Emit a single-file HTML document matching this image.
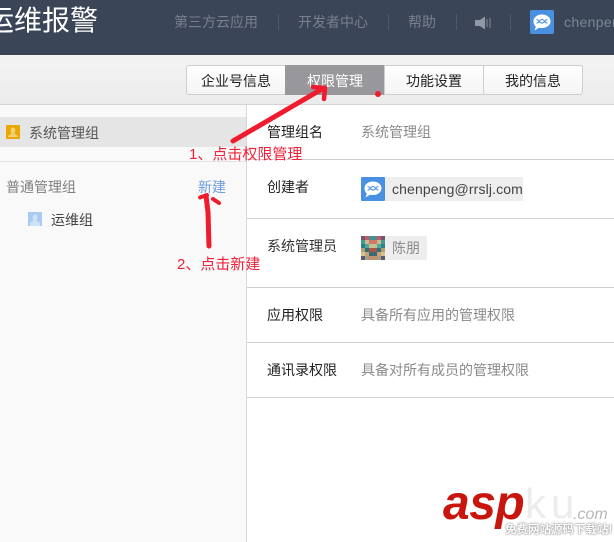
<!DOCTYPE html>
<html lang="zh"><head><meta charset="utf-8">
<style>
html,body{margin:0;padding:0;background:#fff}
#p{position:relative;width:614px;height:542px;overflow:hidden;background:#fff;font-family:"Liberation Sans","Noto Sans CJK SC",sans-serif;font-size:14px;line-height:20px;color:#222}
.a{position:absolute;white-space:nowrap}
.g{color:#8a8a8a}
.n{color:#76808e;top:12px}
.sep{position:absolute;top:14px;width:1px;height:16px;background:#4e5a6a}
.t{position:absolute;top:65px;height:30px;line-height:30px;text-align:center;box-sizing:border-box;background:linear-gradient(#fff,#f4f4f4);border:1px solid #cfcfcf;color:#222}
.hr{position:absolute;left:247px;width:367px;height:1px;background:#cfcfcf}
.r{color:#f0213a;font-size:15px}
</style></head><body><div id="p">
<div class="a" style="left:0;top:0;width:614px;height:55px;background:#3a4558"></div>
<div class="a" style="left:-14px;top:3px;font-size:28px;line-height:36px;color:#fff">运维报警</div>
<div class="a n" style="left:174px">第三方云应用</div>
<div class="sep" style="left:278px"></div>
<div class="a n" style="left:298px">开发者中心</div>
<div class="sep" style="left:388px"></div>
<div class="a n" style="left:408px">帮助</div>
<div class="sep" style="left:456px"></div>
<svg class="a" style="left:475px;top:16px" width="16" height="14" viewBox="0 0 16 14"><path d="M0 4h5l5-3.500v13L5 10H0z" fill="#8f98a4"/><path d="M12 3v8M15 2v10" stroke="#7d8693" stroke-width="1.100"/></svg>
<div class="sep" style="left:510px"></div>
<svg class="a" style="left:530px;top:10px" width="24" height="24" viewBox="0 0 24 24"><rect width="24" height="24" rx="2" fill="#4a90e2"/><path d="M12 4.500c5 0 8.500 3 8.500 6.800s-3.500 6.700-8.500 6.700c-1 0-2 0-3-.3L4.500 20.500l1.300-3.900C4.200 15.300 3.500 13.300 3.500 11.300 3.500 7.500 7 4.500 12 4.500z" fill="#fff"/><path d="M6.500 9.500c2.500 0 3 3.600 5.500 3.600s3-3.600 5.500-3.600M6.500 13.100c2.500 0 3-3.600 5.500-3.600s3 3.600 5.500 3.600" fill="none" stroke="#4a90e2" stroke-width="1.100"/></svg>
<div class="a" style="left:564px;top:12px;color:#7c8694;font-size:14px;letter-spacing:.35px">chenpeng</div>

<div class="a" style="left:0;top:55px;width:614px;height:49px;background:linear-gradient(#f3f3f3,#ececec)"></div>
<div class="a" style="left:0;top:104px;width:614px;height:1px;background:#d4d4d4"></div>
<div class="t" style="left:186px;width:100px;border-radius:3px 0 0 3px">企业号信息</div>
<div class="t" style="left:285px;width:100px;background:#98989c;border-color:#98989c;color:#fff">权限管理</div>
<div class="t" style="left:384px;width:100px">功能设置</div>
<div class="t" style="left:483px;width:100px;border-radius:0 3px 3px 0">我的信息</div>

<div class="a" style="left:0;top:105px;width:246px;height:437px;background:#f9f9f9"></div>
<div class="a" style="left:246px;top:105px;width:1px;height:437px;background:#d8d8d8"></div>
<div class="a" style="left:0;top:117px;width:246px;height:30px;background:#e5e5e5"></div>
<svg class="a" style="left:6px;top:125px" width="14" height="14" viewBox="0 0 14 14"><rect width="14" height="14" rx="1" fill="#e8a800"/><path d="M7 2.500c1.500 0 2.300 1.200 2.300 2.700S8.600 8 8.400 8.800c.8.800 3.100 1.200 3.600 2.700v.5H2v-.5c.5-1.500 2.800-1.900 3.600-2.700C5.400 8 4.700 6.700 4.700 5.200S5.500 2.500 7 2.500z" fill="#f3cf78"/></svg>
<div class="a" style="left:29px;top:123px;color:#555">系统管理组</div>
<div class="a" style="left:0;top:161px;width:246px;height:1px;background:#e3e3e3"></div>
<div class="a" style="left:6px;top:177px;color:#808080">普通管理组</div>
<div class="a" style="left:198px;top:177px;color:#6f9fdc">新建</div>
<svg class="a" style="left:28px;top:212px" width="14" height="14" viewBox="0 0 14 14"><rect width="14" height="14" fill="#a9cbf2"/><path d="M7 2.500c1.500 0 2.300 1.200 2.300 2.700S8.600 8 8.400 8.800c.8.800 3.100 1.200 3.600 2.700V14H2v-2.500c.5-1.500 2.800-1.900 3.600-2.700C5.400 8 4.700 6.700 4.700 5.200S5.500 2.500 7 2.500z" fill="#d0e2f8"/></svg>
<div class="a" style="left:51px;top:210px;color:#444">运维组</div>

<div class="a" style="left:267px;top:122px">管理组名</div>
<div class="a g" style="left:361px;top:122px">系统管理组</div>
<div class="hr" style="top:159px"></div>
<div class="a" style="left:267px;top:177px">创建者</div>
<div class="a" style="left:361px;top:177px;width:162px;height:24px;background:#eeeeee"></div>
<svg class="a" style="left:361px;top:177px" width="24" height="24" viewBox="0 0 24 24"><rect width="24" height="24" rx="1" fill="#4a90e2"/><path d="M12 4.500c5 0 8.500 3 8.500 6.800s-3.500 6.700-8.500 6.700c-1 0-2 0-3-.3L4.500 20.500l1.300-3.900C4.200 15.300 3.500 13.300 3.500 11.300 3.500 7.500 7 4.500 12 4.500z" fill="#fff"/><path d="M6.500 9.500c2.500 0 3 3.600 5.500 3.600s3-3.600 5.500-3.600M6.500 13.100c2.500 0 3-3.600 5.500-3.600s3 3.600 5.500 3.600" fill="none" stroke="#4a90e2" stroke-width="1.100"/></svg>
<div class="a" style="left:392px;top:179px;color:#444;letter-spacing:.13px">chenpeng@rrslj.com</div>
<div class="hr" style="top:218px"></div>
<div class="a" style="left:267px;top:236px;color:#333">系统管理员</div>
<div class="a" style="left:361px;top:236px;width:66px;height:24px;background:#eeeeee;border-radius:0 2px 2px 0"></div>
<svg class="a" style="left:361px;top:236px" width="24" height="24" viewBox="0 0 6 6" shape-rendering="crispEdges">
<g id="q">
<rect x="0" y="0" width="1" height="1" fill="#6b5a6e"/><rect x="1" y="0" width="1" height="1" fill="#c25a68"/><rect x="2" y="0" width="1" height="1" fill="#4a8f90"/>
<rect x="0" y="1" width="1" height="1" fill="#3f9a9a"/><rect x="1" y="1" width="1" height="1" fill="#d8b48a"/><rect x="2" y="1" width="1" height="1" fill="#c97a6a"/>
<rect x="0" y="2" width="1" height="1" fill="#2f7f85"/><rect x="1" y="2" width="1" height="1" fill="#4fa8a0"/><rect x="2" y="2" width="1" height="1" fill="#c8c090"/>
<rect x="0" y="3" width="1" height="1" fill="#b0a070"/><rect x="1" y="3" width="1" height="1" fill="#2f6f7a"/><rect x="2" y="3" width="1" height="1" fill="#a8554a"/>
<rect x="0" y="4" width="1" height="1" fill="#d8c090"/><rect x="1" y="4" width="1" height="1" fill="#c9a080"/><rect x="2" y="4" width="1" height="1" fill="#3a6a70"/>
<rect x="0" y="5" width="1" height="1" fill="#5a5a78"/><rect x="1" y="5" width="1" height="1" fill="#a8a080"/><rect x="2" y="5" width="1" height="1" fill="#c09070"/>
</g>
<use href="#q" transform="matrix(-1 0 0 1 6 0)"/>
</svg>
<div class="a g" style="left:392px;top:238px">陈朋</div>
<div class="hr" style="top:287px"></div>
<div class="a" style="left:267px;top:305px">应用权限</div>
<div class="a g" style="left:361px;top:305px">具备所有应用的管理权限</div>
<div class="hr" style="top:342px"></div>
<div class="a" style="left:267px;top:360px">通讯录权限</div>
<div class="a g" style="left:361px;top:360px">具备对所有成员的管理权限</div>
<div class="hr" style="top:397px"></div>

<svg class="a" style="left:0;top:0" width="614" height="542" viewBox="0 0 614 542" fill="none" stroke="#ee1c2e" stroke-linecap="round" stroke-linejoin="round">
<path d="M233 141L322 89" stroke-width="5"/>
<path d="M313 87L325 88L324 99" stroke-width="4.500"/>
<circle cx="378" cy="94" r="3" fill="#ee1c2e" stroke="none"/>
<path d="M209 246L208 212L206 196" stroke-width="5"/>
<path d="M200 197.500L207 195" stroke-width="4"/>
<path d="M213 199L219 203" stroke-width="4"/>
</svg>
<div class="a r" style="left:189px;top:145px">1、点击权限管理</div>
<div class="a r" style="left:177px;top:255px">2、点击新建</div>

<div class="a" style="left:443px;top:480px;font-size:48px;line-height:48px;font-weight:bold;font-style:italic;color:#c8160e;letter-spacing:-.5px">asp</div>
<div class="a" style="left:525px;top:482px;font-size:42px;line-height:44px;color:#ececec;letter-spacing:5px">ku</div>
<div class="a" style="left:573px;top:507px;font-size:16px;line-height:16px;font-style:italic;color:#b8b8b8">.com</div>
<div class="a" style="left:505px;top:522px;font-size:11.500px;line-height:16px;font-weight:bold;color:#fff;text-shadow:0 0 1px #888,0 0 2px #888">免费网站源码下载站!</div>
</div></body></html>
